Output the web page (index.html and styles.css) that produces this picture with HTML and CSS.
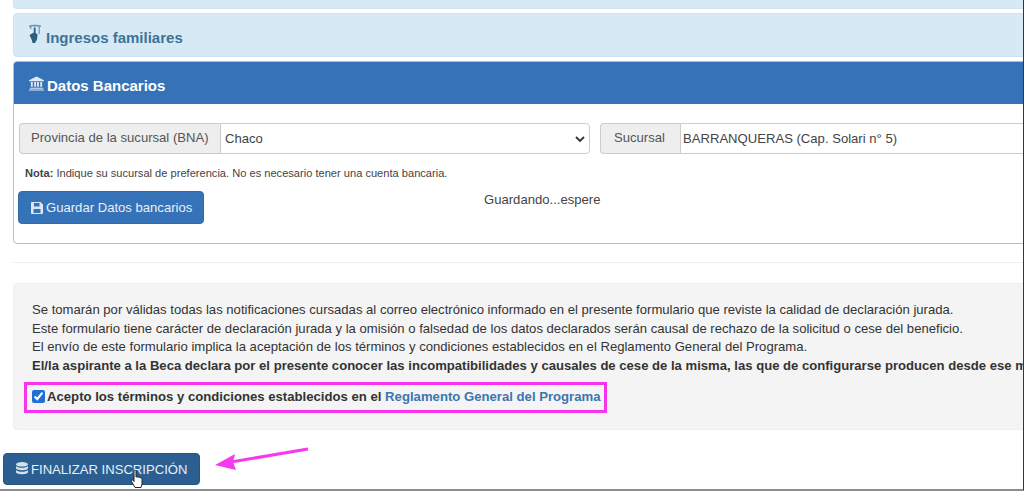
FILE: index.html
```html
<!DOCTYPE html>
<html lang="es">
<head>
    <meta charset="UTF-8">
    <meta name="viewport" content="width=device-width, initial-scale=1.0">
    <title>Inscripción</title>
    <link rel="stylesheet" href="styles.css">
</head>
<body>
    <div class="page">
        <div class="panel-collapsed panel-top"></div>
        <div class="panel-collapsed panel-ingresos">
            <svg class="icon-hand" viewBox="0 0 14 20" width="14" height="20">
                <path d="M1 1.500C4 .5 10 .5 13 1.500V3h-1.200v7H10.600V2.500H3.400V5H2.200V3H1z" fill="#6d97b0"/>
                <path d="M5.800 3.500h1.800v5.500l2 1.500-.6 5-2 3.500H4.500l-.7-3L1.500 11 5.800 8.500z" fill="#2f5f7e"/>
            </svg>
            <h3>Ingresos familiares</h3>
        </div>
        <div class="panel-bank">
            <div class="panel-heading">
                <svg class="icon-bank" viewBox="0 0 16 15" width="15" height="15">
                    <path d="M8 0l8 4v1H0V4zM1 12h14v1H1zM0 14h16v1H0zM2 6h2v5H2zM5.500 6h2v5h-2zM8.500 6h2v5h-2zM12 6h2v5h-2z" fill="#dfe9f4"/>
                </svg>
                <h3>Datos Bancarios</h3>
            </div>
            <div class="panel-body">
                <div class="fields">
                    <div class="input-group group-province">
                        <span class="addon">Provincia de la sucursal (BNA)</span>
                        <div class="control">
                            <span>Chaco</span>
                            <svg class="chevron" viewBox="0 0 10 6" width="10" height="6">
                                <path d="M1 1l4 4 4-4" fill="none" stroke="#333" stroke-width="1.800"/>
                            </svg>
                        </div>
                    </div>
                    <div class="input-group group-branch">
                        <span class="addon addon-branch">Sucursal</span>
                        <div class="control control-branch"><span>BARRANQUERAS (Cap. Solari n° 5)</span></div>
                    </div>
                </div>
                <p class="note"><b>Nota:</b> Indique su sucursal de preferencia. No es necesario tener una cuenta bancaria.</p>
                <div class="save-row">
                    <button class="btn btn-save">
                        <svg viewBox="0 0 12 12" width="12" height="12">
                            <path d="M0 1a1 1 0 0 1 1-1h8.500L12 2.500V11a1 1 0 0 1-1 1H1a1 1 0 0 1-1-1zM3 1v3.500h5.500V1zM2.500 7v4h7V7z" fill="#dbe6f2" fill-rule="evenodd"/>
                        </svg>
                        Guardar Datos bancarios
                    </button>
                    <span class="saving">Guardando...espere</span>
                </div>
            </div>
        </div>
        <hr class="divider">
        <div class="well">
            <p>Se tomarán por válidas todas las notificaciones cursadas al correo electrónico informado en el presente formulario que reviste la calidad de declaración jurada.</p>
            <p>Este formulario tiene carácter de declaración jurada y la omisión o falsedad de los datos declarados serán causal de rechazo de la solicitud o cese del beneficio.</p>
            <p>El envío de este formulario implica la aceptación de los términos y condiciones establecidos en el Reglamento General del Programa.</p>
            <p><b>El/la aspirante a la Beca declara por el presente conocer las incompatibilidades y causales de cese de la misma, las que de configurarse producen desde ese momento la baja.</b></p>
            <label class="accept">
                <input type="checkbox" checked>
                <b>Acepto los términos y condiciones establecidos en el <a href="#">Reglamento General del Programa</a></b>
            </label>
        </div>
        <div class="finish-row">
            <button class="btn btn-finish">
                <svg viewBox="0 0 12 14" width="12" height="14">
                    <ellipse cx="6" cy="2.300" rx="6" ry="2.300" fill="#d5e0ea"/>
                    <path d="M0 4v2c0 1.300 2.700 2.300 6 2.300S12 7.300 12 6V4c-1 1.200-3.300 1.800-6 1.800S1 5.200 0 4zM0 8v2c0 1.300 2.700 2.300 6 2.300S12 11.300 12 10V8c-1 1.200-3.300 1.800-6 1.800S1 9.200 0 8z" fill="#d5e0ea"/>
                </svg>
                FINALIZAR INSCRIPCIÓN
            </button>
        </div>
    </div>
    <svg class="arrow" viewBox="0 0 96 24" width="96" height="24">
        <path d="M93 2L16 15" stroke="#f739ee" stroke-width="3" fill="none"/>
        <path d="M0 18l20-11-2 8 3 8z" fill="#f739ee"/>
    </svg>
    <svg class="cursor" viewBox="0 0 14 20" width="14" height="20">
        <path d="M4 1.500c1-.8 2-.3 2 1V8l1-.3 1 .3 1.200.2 1.300.5c1 .4 1.500 1 1.500 2V15l-1 3.500H5L1.500 12.500c-.8-1.300.5-2.300 1.500-1.300L4 12.500z" fill="#fff" stroke="#222" stroke-width="1"/>
    </svg>
</body>
</html>
```

FILE: styles.css
```css
* { box-sizing: border-box; margin: 0; padding: 0; }
html, body {
    height: 491px;
    width: 1024px;
    overflow: hidden;
}
body {
    font-family: 'Liberation Sans', Arial, sans-serif;
    font-size: 13.100px;
    color: #333;
    background: #fff;
    position: relative;
    border-bottom: 2px solid #8b8f94;
    border-right: 1px solid #33363a;
}
.page {
    width: 1060px;
    padding-left: 13px;
}
.panel-collapsed {
    background: #d8e9f6;
    border: 1px solid #cfe2f0;
    border-radius: 4px;
    color: #31708f;
}
.panel-top {
    height: 10px;
    margin-top: -1px;
    border-top: none;
    border-radius: 0 0 4px 4px;
}
.panel-ingresos {
    height: 44px;
    margin-top: 4px;
    padding: 10px 14px 0;
    display: flex;
    align-items: flex-start;
    gap: 4px;
}
.panel-ingresos h3 {
    font-size: 15px;
    line-height: 28px;
    color: #3d7396;
}
.icon-hand { margin-top: 0; }
.panel-bank {
    margin-top: 4px;
    height: 183px;
    border: 1px solid #a9c2d9;
    border-radius: 4px;
    overflow: hidden;
}
.panel-heading {
    height: 42px;
    background: #3572b7;
    color: #fff;
    padding: 15px 15px 0;
    display: flex;
    align-items: flex-start;
    gap: 3px;
}
.panel-heading h3 {
    font-size: 15px;
    line-height: 18px;
}
.icon-bank { margin-top: -1px; }
.panel-body {
    padding: 19px 5px 0;
}
.fields {
    display: flex;
    gap: 10px;
}
.input-group {
    display: flex;
    height: 31px;
}
.group-province { width: 571px; }
.group-branch { flex: 1; }
.addon {
    background: #eee;
    border: 1px solid #ccc;
    border-right: none;
    border-radius: 4px 0 0 4px;
    color: #555;
    line-height: 27px;
    padding: 0 11px;
    width: 201px;
    flex: none;
    white-space: nowrap;
}
.addon-branch {
    width: 80px;
    padding: 0 13px;
}
.control {
    flex: 1;
    border: 1px solid #ccc;
    border-radius: 0 4px 4px 0;
    background: #fff;
    color: #444;
    line-height: 29px;
    padding: 0 4px;
    display: flex;
    justify-content: space-between;
    align-items: center;
}
.control-branch { padding-left: 2px; }
.note {
    font-size: 11.100px;
    line-height: 14px;
    margin-top: 12px;
    padding-left: 6px;
    color: #444;
}
.save-row {
    display: flex;
    margin: 11px 0 0 -1px;
}
.btn {
    font-family: inherit;
    font-size: 13.100px;
    border-radius: 4px;
    color: #e8f0f8;
    cursor: pointer;
    display: flex;
    align-items: center;
    gap: 3px;
}
.btn-save {
    width: 186px;
    height: 33px;
    background: #3572b7;
    border: 1px solid #2e6da4;
    padding-left: 12px;
}
.saving {
    margin-left: 280px;
    margin-top: 1px;
    line-height: 15px;
    color: #444;
}
.divider {
    border: none;
    border-top: 1px solid #eee;
    margin-top: 18px;
}
.well {
    margin-top: 20px;
    height: 147px;
    background: #f4f4f4;
    border: 1px solid #eee;
    border-radius: 4px;
    padding: 17px 18px 0;
    white-space: nowrap;
}
.well p {
    line-height: 18.500px;
}
.accept {
    display: flex;
    align-items: center;
    width: 583px;
    height: 31px;
    margin: 7px 0 0 -8px;
    border: 3px solid #f932f0;
    padding: 0 0 2px 5px;
    color: #333;
    font-size: 13.150px;
}
.accept input {
    width: 13px;
    height: 13px;
    margin-right: 2px;
    accent-color: #1f6fd6;
}
.accept a {
    color: #3a76b0;
    text-decoration: none;
}
.finish-row {
    margin: 23px 0 0 -10px;
}
.btn-finish {
    width: 197px;
    height: 32px;
    background: #2b5f91;
    border: 1px solid #27577f;
    padding-left: 12px;
}
.arrow {
    position: absolute;
    left: 215px;
    top: 447px;
}
.cursor {
    position: absolute;
    left: 130px;
    top: 469px;
}
```
